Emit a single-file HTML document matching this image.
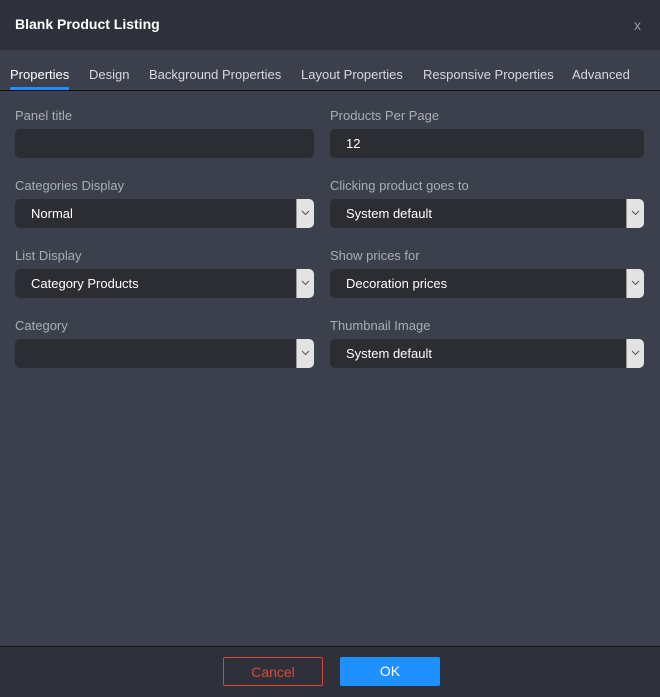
<!DOCTYPE html>
<html><head><style>
body{margin:0;width:660px;height:696px;background:#3b404c;font-family:"Liberation Sans",sans-serif;position:relative;overflow:hidden}
.hdr{position:absolute;left:0;top:0;width:660px;height:50px;background:#2e3139}
.hdr b{position:absolute;left:15px;top:16px;color:#fff;font-size:14px}
.hdr .x{position:absolute;right:19px;top:17px;color:#9a9ea8;font-size:14px}
.tabs{position:absolute;left:0;top:50px;width:660px;height:40px;border-bottom:1px solid #111}
.tab{position:absolute;top:17px;font-size:13px;color:#d6d9e0}
.tab.a{color:#fff}
.ul{position:absolute;left:10px;top:87px;width:59px;height:3px;background:#1e90ff;border-radius:1px}
.lbl{position:absolute;color:#a9adb6;font-size:13px}
.in{position:absolute;width:299px;height:29px;background:#2b2d32;border-radius:5px;color:#fff;font-size:13px;box-sizing:border-box;padding:7px 0 0 16px}
.in.r{width:314px}
.arr{position:absolute;right:0;top:0;width:17px;height:29px;background:#e3e3e3;border-radius:0 5px 5px 0;box-shadow:-1px 0 0 #999}
.arr svg{position:absolute;left:4px;top:11px}
.ftr{position:absolute;left:0;top:646px;width:660px;height:50px;background:#2e3139;border-top:1px solid #111}
.btn{position:absolute;top:10px;width:100px;height:29px;box-sizing:border-box;font-size:14px;text-align:center;line-height:28px;border-radius:2px}
</style></head><body>
<div class="hdr"><b>Blank Product Listing</b><span class="x">x</span></div>
<div class="tabs">
<span class="tab a" style="left:10px">Properties</span>
<span class="tab" style="left:89px">Design</span>
<span class="tab" style="left:149px">Background Properties</span>
<span class="tab" style="left:301px">Layout Properties</span>
<span class="tab" style="left:423px">Responsive Properties</span>
<span class="tab" style="left:572px">Advanced</span>
</div>
<div class="ul"></div>

<div class="lbl" style="left:15px;top:108px">Panel title</div>
<div class="in" style="left:15px;top:129px"></div>
<div class="lbl" style="left:330px;top:108px">Products Per Page</div>
<div class="in r" style="left:330px;top:129px">12</div>

<div class="lbl" style="left:15px;top:178px">Categories Display</div>
<div class="in" style="left:15px;top:199px">Normal<div class="arr"><svg width="9" height="6"><path d="M1 1L4.5 4.5L8 1" stroke="#555" fill="none"/></svg></div></div>
<div class="lbl" style="left:330px;top:178px">Clicking product goes to</div>
<div class="in r" style="left:330px;top:199px">System default<div class="arr"><svg width="9" height="6"><path d="M1 1L4.5 4.5L8 1" stroke="#555" fill="none"/></svg></div></div>

<div class="lbl" style="left:15px;top:248px">List Display</div>
<div class="in" style="left:15px;top:269px">Category Products<div class="arr"><svg width="9" height="6"><path d="M1 1L4.5 4.5L8 1" stroke="#555" fill="none"/></svg></div></div>
<div class="lbl" style="left:330px;top:248px">Show prices for</div>
<div class="in r" style="left:330px;top:269px">Decoration prices<div class="arr"><svg width="9" height="6"><path d="M1 1L4.5 4.5L8 1" stroke="#555" fill="none"/></svg></div></div>

<div class="lbl" style="left:15px;top:318px">Category</div>
<div class="in" style="left:15px;top:339px"><div class="arr"><svg width="9" height="6"><path d="M1 1L4.5 4.5L8 1" stroke="#555" fill="none"/></svg></div></div>
<div class="lbl" style="left:330px;top:318px">Thumbnail Image</div>
<div class="in r" style="left:330px;top:339px">System default<div class="arr"><svg width="9" height="6"><path d="M1 1L4.5 4.5L8 1" stroke="#555" fill="none"/></svg></div></div>

<div class="ftr">
<div class="btn" style="left:223px;border:1px solid #d9453a;color:#e0463a">Cancel</div>
<div class="btn" style="left:340px;background:#1e90ff;color:#fff">OK</div>
</div>
</body></html>
